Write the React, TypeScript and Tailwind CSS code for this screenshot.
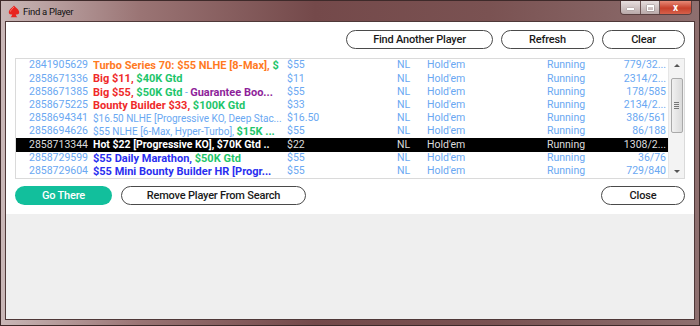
import React from "react";

type Seg = { text: string; cls: string };

type Row = {
  id: string;
  name: Seg[];
  buyIn: string;
  entries: string;
  selected?: boolean;
};

const RED = "text-[#ef2a2a] font-bold";
const GREEN = "text-[#1ec56a] font-bold";
const ORANGE = "text-[#ff7a1f] font-bold";
const PURPLE = "text-[#8e1f9a] font-bold";
const BLUE = "text-[#2a2ff0] font-bold";
const PLAIN = "text-[#6aa8f2] text-[10px]";

const rows: Row[] = [
  {
    id: "2841905629",
    name: [
      { text: "Turbo Series 70: $55 NLHE [8-Max], ", cls: ORANGE },
      { text: "$", cls: GREEN },
    ],
    buyIn: "$55",
    entries: "779/32...",
  },
  {
    id: "2858671336",
    name: [
      { text: "Big $11, ", cls: RED },
      { text: "$40K Gtd", cls: GREEN },
    ],
    buyIn: "$11",
    entries: "2314/2...",
  },
  {
    id: "2858671385",
    name: [
      { text: "Big $55, ", cls: RED },
      { text: "$50K Gtd", cls: GREEN },
      { text: " - ", cls: PLAIN },
      { text: "Guarantee Boo...", cls: PURPLE },
    ],
    buyIn: "$55",
    entries: "178/585",
  },
  {
    id: "2858675225",
    name: [
      { text: "Bounty Builder $33, ", cls: RED },
      { text: "$100K Gtd", cls: GREEN },
    ],
    buyIn: "$33",
    entries: "2134/2...",
  },
  {
    id: "2858694341",
    name: [{ text: "$16.50 NLHE [Progressive KO, Deep Stac...", cls: PLAIN }],
    buyIn: "$16.50",
    entries: "386/561",
  },
  {
    id: "2858694626",
    name: [
      { text: "$55 NLHE [6-Max, Hyper-Turbo], ", cls: PLAIN },
      { text: "$15K ...", cls: GREEN },
    ],
    buyIn: "$55",
    entries: "86/188",
  },
  {
    id: "2858713344",
    name: [{ text: "Hot $22 [Progressive KO], $70K Gtd ..", cls: "text-white font-bold text-[10.5px]" }],
    buyIn: "$22",
    entries: "1308/2...",
    selected: true,
  },
  {
    id: "2858729599",
    name: [
      { text: "$55 Daily Marathon, ", cls: BLUE },
      { text: "$50K Gtd", cls: GREEN },
    ],
    buyIn: "$55",
    entries: "36/76",
  },
  {
    id: "2858729604",
    name: [{ text: "$55 Mini Bounty Builder HR [Progr...", cls: BLUE }],
    buyIn: "$55",
    entries: "729/840",
  },
];

function PillButton({ label, className = "" }: { label: string; className?: string }) {
  return (
    <button
      className={`h-[19px] rounded-full border border-[#4a4a4a] bg-white text-[11px] font-medium text-[#1a1a1a] tracking-[-0.2px] leading-none ${className}`}
    >
      {label}
    </button>
  );
}

function Spade() {
  return (
    <svg width="12" height="13" viewBox="0 0 12 13">
      <path
        d="M6 0.5 C4 3 0.8 4.6 0.8 7.2 C0.8 9 2.6 10 4.2 9.2 C4 10.6 3.4 11.6 2.6 12.3 L9.4 12.3 C8.6 11.6 8 10.6 7.8 9.2 C9.4 10 11.2 9 11.2 7.2 C11.2 4.6 8 3 6 0.5 Z"
        fill="#e8241f"
      />
      <path d="M6 2 C4.8 3.6 2.6 4.9 2.4 6.6" stroke="#ff8a80" strokeWidth="0.8" fill="none" />
    </svg>
  );
}

function ListRow({ row }: { row: Row }) {
  const sub = row.selected ? "text-[#dcdcdc]" : "text-[#6aa8f2]";
  return (
    <div
      className={`grid grid-cols-[77px_194px_110px_30px_120px_64px_57px] h-[13.75px] items-center text-[10.5px] leading-none whitespace-nowrap ${
        row.selected ? "bg-black" : ""
      }`}
    >
      <span className={`pl-[13px] ${sub}`}>{row.id}</span>
      <span className="overflow-hidden text-[11px]">
        {row.name.map((s, i) => (
          <span key={i} className={s.cls}>
            {s.text}
          </span>
        ))}
      </span>
      <span className={sub}>{row.buyIn}</span>
      <span className={sub}>NL</span>
      <span className={sub}>Hold'em</span>
      <span className={sub}>Running</span>
      <span className={`text-right pr-[2px] ${sub}`}>{row.entries}</span>
    </div>
  );
}

export default function App() {
  return (
    <div
      className="w-[700px] h-[326px] flex flex-col bg-[linear-gradient(to_right,#c9b7b7_0%,#9a7474_20%,#74494a_45%,#7a5252_70%,#8e6f6f_100%)] border border-[#3e2a2a]"
      style={{ fontFamily: "Roboto, 'Liberation Sans', sans-serif" }}
    >
      {/* title bar */}
      <div className="h-[20px] flex items-start shrink-0 relative">
        <div className="flex items-center gap-[3px] pl-[7px] pt-[4px]">
          <Spade />
          <span className="text-[9.5px] text-[#111] leading-none tracking-[-0.3px]">
            Find a Player
          </span>
        </div>
        <div className="ml-auto mr-[7px] flex h-[14px] border border-[#5a4040] border-t-0 rounded-b-[4px] overflow-hidden">
          <div className="w-[20px] bg-[linear-gradient(#e7dede,#b9a9a9)] flex items-center justify-center border-r border-[#6d5555]">
            <div className="w-[7px] h-[2px] bg-white mt-[3px] shadow-[0_0_1px_#333]" />
          </div>
          <div className="w-[19px] bg-[linear-gradient(#e7dede,#b9a9a9)] flex items-center justify-center border-r border-[#6d5555]">
            <div className="w-[7px] h-[6px] border border-white border-t-2 shadow-[0_0_1px_#333]" />
          </div>
          <div className="w-[31px] bg-[linear-gradient(#e88a77,#c7402b_55%,#d5614b)] flex items-center justify-center text-white text-[10px] font-bold leading-none">
            x
          </div>
        </div>
      </div>

      {/* client area */}
      <div className="flex-1 mx-[4px] mb-[5px] border border-[#4f3838] flex flex-col">
        <div className="bg-white h-[192px] flex flex-col px-[9px] pt-[8px]">
          <div className="flex justify-end gap-[8px]">
            <PillButton label="Find Another Player" className="w-[147px]" />
            <PillButton label="Refresh" className="w-[93px]" />
            <PillButton label="Clear" className="w-[83px]" />
          </div>

          <div className="mt-[9px] h-[121px] border border-[#dadada] flex overflow-hidden">
            <div className="flex-1 flex flex-col overflow-hidden">
              {rows.map((r) => (
                <ListRow key={r.id} row={r} />
              ))}
            </div>
            <div className="w-[16px] bg-[#f3f3f3] border-l border-[#e6e6e6] flex flex-col items-center">
              <div className="h-[13px] flex items-center justify-center">
                <div className="w-0 h-0 border-x-[3px] border-x-transparent border-b-[3px] border-b-[#555]" />
              </div>
              <div className="mt-[6px] w-[12px] h-[55px] rounded-[2px] border border-[#a9a9a9] bg-[linear-gradient(to_right,#f1f1f1,#dadada)] flex flex-col items-center justify-center gap-[1px]">
                <div className="w-[5px] h-px bg-[#777]" />
                <div className="w-[5px] h-px bg-[#777]" />
                <div className="w-[5px] h-px bg-[#777]" />
                <div className="w-[5px] h-px bg-[#777]" />
              </div>
              <div className="mt-auto h-[13px] flex items-center justify-center">
                <div className="w-0 h-0 border-x-[3px] border-x-transparent border-t-[3px] border-t-[#555]" />
              </div>
            </div>
          </div>

          <div className="mt-[7px] flex items-center gap-[9px]">
            <button className="w-[97px] h-[19px] rounded-full bg-[#12bf9c] text-white text-[11px] font-medium tracking-[-0.2px] leading-none">
              Go There
            </button>
            <PillButton label="Remove Player From Search" className="w-[185px]" />
            <PillButton label="Close" className="w-[84px] ml-auto" />
          </div>
        </div>
        <div className="flex-1 bg-[#efefef]" />
      </div>
    </div>
  );
}
